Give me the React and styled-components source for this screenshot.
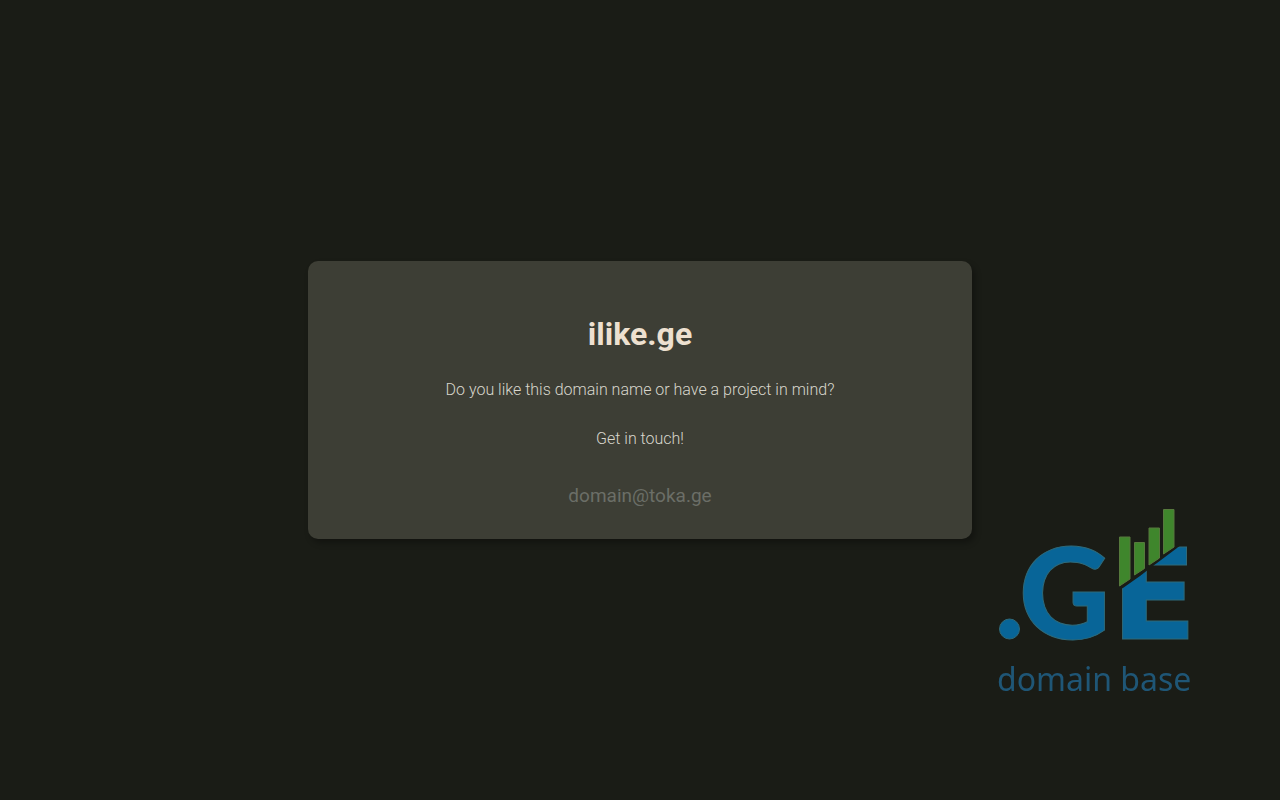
import React from 'react'
import styled, { createGlobalStyle } from "styled-components"

const GlobalStyle = createGlobalStyle`
    body {
        margin: 0;
        background: #1a1c16;
        font-family: Roboto, "Liberation Sans", sans-serif;
    }
`;


/****************** PAGE ******************/

const Page = styled.main`
    display: flex;
    align-items: center;
    justify-content: center;
    min-height: 100vh;
    padding: 16px;
    box-sizing: border-box;
`;

const Card = styled.section`
    display: flex;
    flex-direction: column;
    align-items: center;
    gap: 23px;
    width: 100%;
    max-width: 664px;
    padding: 53px 32px 30px;
    box-sizing: border-box;
    border-radius: 10px;
    background: #3d3e35;
    box-shadow: 3px 4px 6px rgba(0, 0, 0, 0.3);
    text-align: center;
`;

const DomainName = styled.h1`
    margin: 0;
    color: #ede0d0;
    font-size: 32px;
    font-weight: 700;
    line-height: 40px;
`;

const Text = styled.p`
    margin: 0;
    color: #d8d6cc;
    font-size: 16px;
    font-weight: 300;
    line-height: 26px;
`;

const MailLink = styled.a`
    margin-top: 8px;
    color: #6b6e67;
    font-size: 19px;
    line-height: 26px;
    text-decoration: none;
`;


/****************** LOGO ******************/

const LogoSvg = styled.svg`
    position: fixed;
    right: 80px;
    bottom: 100px;
    width: 220px;
    height: 200px;
`;

const LogoLetter = styled.text`
    font-family: ${p => p.$font}, sans-serif;
    font-size: 126px;
    font-weight: ${p => p.$weight};
    fill: #086598;
    stroke: #2f6a7a;
    stroke-width: 1px;
`;

const LogoCaption = styled.text`
    font-family: "Noto Sans", "Open Sans", sans-serif;
    font-size: 32px;
    fill: #1f5676;
`;

const Logo = () => (
    <LogoSvg viewBox="0 0 220 200" role="img" aria-label=".GE domain base">
        <defs>
            <clipPath id="chartCut">
                <path d="M130 91.5 L138 91.5 L160 76 L173 66 L197 48 L208 40 L220 40 V150 H130 Z" />
            </clipPath>
        </defs>
        <circle cx="29.5" cy="129" r="10" fill="#086598" stroke="#2f6a7a" />
        <LogoLetter x="39" y="139" $font="Lato" $weight={900}>G</LogoLetter>
        <g clipPath="url(#chartCut)">
            <LogoLetter x="131" y="139" $font="DejaVu Sans" $weight={700}>E</LogoLetter>
        </g>
        <g fill="#3f862c" stroke="#56793c">
            <path d="M139.5 37 H150 V79 L139.5 86 Z" />
            <path d="M154.5 42.5 H164.5 V68.5 L154.5 75 Z" />
            <path d="M169 28 H179.5 V58 L169 65 Z" />
            <path d="M183.5 9.5 H194 V47 L183.5 54 Z" />
        </g>
        <LogoCaption x="17" y="191">domain base</LogoCaption>
    </LogoSvg>
)


export default function App() {
    return (
        <>
            <GlobalStyle />
            <Page>
                <Card>
                    <DomainName>ilike.ge</DomainName>
                    <Text>Do you like this domain name or have a project in mind?</Text>
                    <Text>Get in touch!</Text>
                    <MailLink href="mailto:domain@toka.ge">domain@toka.ge</MailLink>
                </Card>
            </Page>
            <Logo />
        </>
    )
}
